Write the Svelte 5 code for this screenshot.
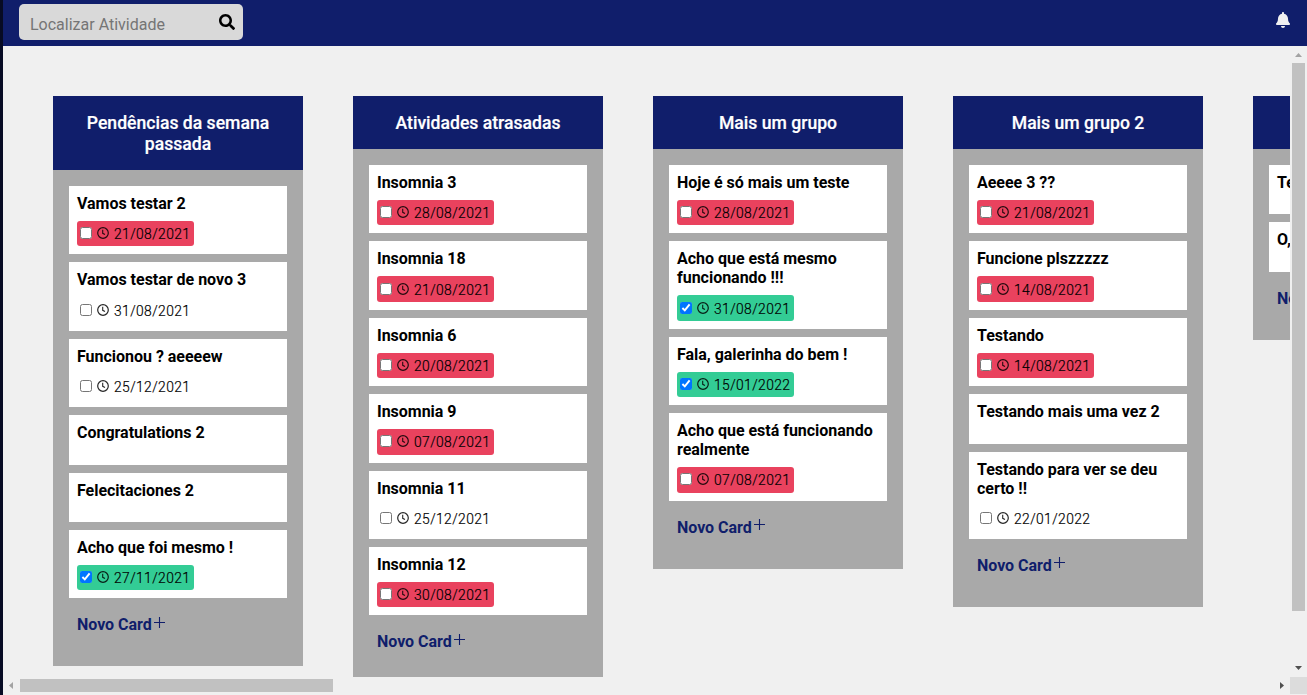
<script>
  const late = 'late', done = 'done', open = 'open';
  const columns = [
    { title: 'Pendências da semana passada', cards: [
      ['Vamos testar 2', '21/08/2021', late],
      ['Vamos testar de novo 3', '31/08/2021', open],
      ['Funcionou ? aeeeew', '25/12/2021', open],
      ['Congratulations 2'],
      ['Felecitaciones 2'],
      ['Acho que foi mesmo !', '27/11/2021', done]
    ] },
    { title: 'Atividades atrasadas', cards: [
      ['Insomnia 3', '28/08/2021', late],
      ['Insomnia 18', '21/08/2021', late],
      ['Insomnia 6', '20/08/2021', late],
      ['Insomnia 9', '07/08/2021', late],
      ['Insomnia 11', '25/12/2021', open],
      ['Insomnia 12', '30/08/2021', late]
    ] },
    { title: 'Mais um grupo', cards: [
      ['Hoje é só mais um teste', '28/08/2021', late],
      ['Acho que está mesmo funcionando !!!', '31/08/2021', done],
      ['Fala, galerinha do bem !', '15/01/2022', done],
      ['Acho que está funcionando realmente', '07/08/2021', late]
    ] },
    { title: 'Mais um grupo 2', cards: [
      ['Aeeee 3 ??', '21/08/2021', late],
      ['Funcione plszzzzz', '14/08/2021', late],
      ['Testando', '14/08/2021', late],
      ['Testando mais uma vez 2'],
      ['Testando para ver se deu certo !!', '22/01/2022', open]
    ] },
    { title: '', cards: [['Te'], ['O,']] }
  ];
</script>

<div class="page">
  <header>
    <div class="search">
      <input type="text" placeholder="Localizar Atividade" />
      <svg width="16" height="16" viewBox="0 0 512 512"><path d="M505 442.7L405.3 343c-4.500-4.500-10.600-7-17-7H372c27.600-35.300 44-79.700 44-128C416 93.100 322.900 0 208 0S0 93.100 0 208s93.100 208 208 208c48.300 0 92.700-16.400 128-44v16.300c0 6.400 2.500 12.500 7 17l99.700 99.700c9.400 9.400 24.600 9.400 33.900 0l28.300-28.300c9.400-9.400 9.400-24.600.1-34zM208 336c-70.700 0-128-57.200-128-128 0-70.700 57.200-128 128-128 70.700 0 128 57.200 128 128 0 70.700-57.200 128-128 128z" /></svg>
    </div>
    <svg class="bell" width="14" height="16" viewBox="0 0 448 512"><path fill="#f0f0f0" d="M224 512c35.320 0 63.970-28.650 63.970-64H160.030c0 35.350 28.650 64 63.970 64zm215.390-149.710c-19.320-20.760-55.470-51.990-55.470-154.290 0-77.700-54.480-139.900-127.940-155.160V32c0-17.670-14.320-32-31.980-32s-31.980 14.330-31.980 32v20.840C118.560 68.100 64.080 130.300 64.080 208c0 102.300-36.150 133.530-55.470 154.290-6 6.450-8.660 14.160-8.610 21.710.110 16.400 12.980 32 32.100 32h383.800c19.120 0 32-15.600 32.100-32 .050-7.550-2.610-15.270-8.610-21.710z" /></svg>
  </header>

  <main>
    <div class="board">
      {#each columns as column}
        <section>
          <h2>{column.title}</h2>
          <div class="list">
            {#each column.cards as [title, date, status]}
              <article>
                <h3>{title}</h3>
                {#if date}
                  <label class="date {status}">
                    <input type="checkbox" checked={status === done} />
                    <svg width="12" height="12" viewBox="0 0 12 12" fill="none" stroke="#000" stroke-opacity=".85"><circle cx="6" cy="6" r="5.300" stroke-width="1.200" /><path d="M5.700 2.800V6.300L8 7.500" stroke-width="1.100" /></svg>
                    <span>{date}</span>
                  </label>
                {:else}
                  <div class="blank"></div>
                {/if}
              </article>
            {/each}
            <button>Novo Card<svg width="11" height="11" viewBox="0 0 11 11"><path d="M5.500 0V11M0 5.500H11" stroke="#101e6b" stroke-width="1.100" /></svg></button>
          </div>
        </section>
      {/each}
    </div>
    <div class="vbar">
      <svg width="7" height="4" viewBox="0 0 7 4"><path fill="#a3a3a3" d="M0 4L3.500 0L7 4Z" /></svg>
      <div class="vthumb"></div>
      <svg width="7" height="4" viewBox="0 0 7 4"><path fill="#505050" d="M0 0H7L3.500 4Z" /></svg>
    </div>
    <div class="hbar">
      <svg width="4" height="7" viewBox="0 0 4 7"><path fill="#a3a3a3" d="M4 0V7L0 3.500Z" /></svg>
      <div class="hthumb"></div>
      <svg width="4" height="7" viewBox="0 0 4 7"><path fill="#505050" d="M0 0V7L4 3.500Z" /></svg>
    </div>
    <div class="corner"></div>
  </main>
</div>

<style>
  :global(body) { margin: 0; overflow: hidden; }
  .page {
    box-sizing: border-box;
    width: 1307px;
    height: 695px;
    display: flex;
    flex-direction: column;
    border-left: 3px solid #070b24;
    background: #f0f0f0;
    font-family: Roboto, sans-serif;
    color: #000;
    overflow: hidden;
  }
  header {
    box-sizing: border-box;
    flex: none;
    height: 46px;
    padding: 4px 17px 6px 16px;
    display: flex;
    justify-content: space-between;
    background: #101e6b;
  }
  .search {
    box-sizing: border-box;
    width: 224px;
    height: 36px;
    padding: 0 8px 0 11px;
    display: flex;
    align-items: center;
    border-radius: 5px;
    background: #d9d9d9;
  }
  .search input {
    flex: 1;
    min-width: 0;
    padding: 4px 0 0;
    border: 0;
    outline: 0;
    background: none;
    font: 400 16px Roboto, sans-serif;
  }
  .search input::placeholder { color: #757575; }
  .bell { margin-top: 8px; }
  main {
    flex: 1;
    min-height: 0;
    display: grid;
    grid-template: minmax(0, 1fr) 18px / minmax(0, 1fr) 17px;
  }
  .board {
    display: flex;
    align-items: flex-start;
    gap: 50px;
    padding: 50px 0 0 50px;
    overflow: hidden;
  }
  section { flex: none; width: 250px; background: #a9a9a9; }
  h2 {
    box-sizing: border-box;
    min-height: 53px;
    margin: 0;
    padding: 17px 16px 15px;
    background: #101e6b;
    color: #fff;
    font-size: 17.6px;
    font-weight: 500;
    line-height: 21px;
    text-align: center;
    -webkit-text-stroke: .2px #fff;
  }
  .list { padding: 16px 16px 32px; }
  article { margin-bottom: 8px; padding: 8px; background: #fff; }
  h3 { margin: 0 0 8px; font-size: 16px; line-height: 19px; font-weight: 700; letter-spacing: -.02px; }
  .date {
    box-sizing: border-box;
    width: 117px;
    height: 25.4px;
    padding: 0 3px 1px;
    display: flex;
    align-items: center;
    border-radius: 3px;
    font-size: 13.8px;
    font-weight: 300;
    letter-spacing: .42px;
    -webkit-text-stroke: .2px #000;
  }
  .date input { flex: none; width: 12px; height: 12px; margin: 0 5px 0 0; }
  .date svg { flex: none; }
  .date span { margin: 2px 0 0 5px; line-height: 16px; }
  .late { background: #e9425e; }
  .done { background: #33cc95; }
  .blank { height: 6.400px; }
  button {
    display: flex;
    height: 19px;
    margin: 17px 0 0 8px;
    padding: 0;
    border: 0;
    background: none;
    color: #101e6b;
    font: 700 16px/19px Roboto, sans-serif;
    letter-spacing: -.03px;
  }
  button svg { margin: 1.500px 0 0 2.500px; }
  .vbar { display: flex; flex-direction: column; align-items: center; padding: 7px 2px 7px 2px; }
  .vthumb { width: 13px; height: 548px; margin: 6px 0 auto; background: #c1c1c1; }
  .hbar { display: flex; align-items: center; padding: 0 6px 1px; }
  .hthumb { width: 313px; height: 13px; margin: 0 auto 0 7px; background: #c1c1c1; }
  .corner { margin-bottom: 1px; background: #dcdcdc; }
</style>
